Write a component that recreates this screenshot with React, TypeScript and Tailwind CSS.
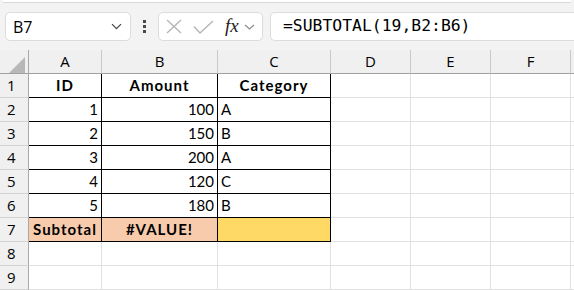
import React from "react";

const COLS = [
  { key: "A", w: 73 },
  { key: "B", w: 116 },
  { key: "C", w: 113 },
  { key: "D", w: 80 },
  { key: "E", w: 80 },
  { key: "F", w: 80 },
];

type Cell = {
  text?: string;
  align?: "left" | "right" | "center";
  bold?: boolean;
  bg?: string;
  black?: boolean;
};

const data: Cell[][] = [
  [
    { text: "ID", align: "center", bold: true, black: true },
    { text: "Amount", align: "center", bold: true, black: true },
    { text: "Category", align: "center", bold: true, black: true },
  ],
  [
    { text: "1", align: "right", black: true },
    { text: "100", align: "right", black: true },
    { text: "A", align: "left", black: true },
  ],
  [
    { text: "2", align: "right", black: true },
    { text: "150", align: "right", black: true },
    { text: "B", align: "left", black: true },
  ],
  [
    { text: "3", align: "right", black: true },
    { text: "200", align: "right", black: true },
    { text: "A", align: "left", black: true },
  ],
  [
    { text: "4", align: "right", black: true },
    { text: "120", align: "right", black: true },
    { text: "C", align: "left", black: true },
  ],
  [
    { text: "5", align: "right", black: true },
    { text: "180", align: "right", black: true },
    { text: "B", align: "left", black: true },
  ],
  [
    { text: "Subtotal", align: "center", bold: true, bg: "peach", black: true },
    { text: "#VALUE!", align: "center", bold: true, bg: "peach", black: true },
    { text: "", bg: "yellow", black: true },
  ],
  [],
  [],
];

function GridCell({ cell, w }: { cell?: Cell; w: number }) {
  const black = cell?.black;
  const bg =
    cell?.bg === "peach"
      ? "bg-[#f8cbad]"
      : cell?.bg === "yellow"
      ? "bg-[#ffd966]"
      : "bg-white";
  const border = black
    ? "border-r border-b border-r-black border-b-black"
    : "border-r border-b border-r-[#e1e1e1] border-b-[#e1e1e1]";
  const align =
    cell?.align === "right"
      ? "justify-end pr-[3px]"
      : cell?.align === "center"
      ? "justify-center"
      : "justify-start pl-[3px]";
  return (
    <div
      className={`h-[24px] shrink-0 flex items-center ${bg} ${border} ${align} ${
        cell?.bold ? "font-bold tracking-[1px]" : "font-normal"
      } text-[15px] text-black font-['Lato',sans-serif] leading-none`}
      style={{ width: w }}
    >
      {cell?.text}
    </div>
  );
}

export default function App() {
  return (
    <div className="w-[574px] h-[290px] overflow-hidden bg-white relative">
      {/* Toolbar */}
      <div className="h-[50px] bg-[#f3f3f3] flex flex-col">
        <div className="h-[3px] mx-[2px] bg-white border-b border-[#dadada] rounded-b-[5px]" />
        <div className="flex items-start pt-[9px] pl-[5px]">
          {/* Name box */}
          <div className="w-[126px] h-[29px] bg-white border border-[#dcdcdc] rounded-[5px] flex items-center pl-[7px] pr-[8px]">
            <span className="text-[16px] text-black font-['Open_Sans',sans-serif] leading-none">
              B7
            </span>
            <svg className="ml-auto" width="11" height="7" viewBox="0 0 11 7">
              <path d="M1 1.2 L5.5 5.7 L10 1.2" fill="none" stroke="#444" strokeWidth="1.2" />
            </svg>
          </div>
          {/* dots */}
          <div className="w-[27px] h-[29px] flex flex-col items-center justify-center gap-[2px]">
            <div className="w-[3px] h-[3px] bg-[#4a4a4a]" />
            <div className="w-[3px] h-[3px] bg-[#4a4a4a]" />
            <div className="w-[3px] h-[3px] bg-[#4a4a4a]" />
          </div>
          {/* fx box */}
          <div className="w-[105px] h-[29px] bg-white border border-[#dcdcdc] rounded-[5px] flex items-center pl-[7px]">
            <svg width="16" height="15" viewBox="0 0 16 15">
              <path d="M1 1 L15 14 M15 1 L1 14" fill="none" stroke="#b4b4b4" strokeWidth="1.3" />
            </svg>
            <svg className="ml-[11px]" width="21" height="14" viewBox="0 0 21 14">
              <path d="M1 6.5 L7 13 L20 1" fill="none" stroke="#b4b4b4" strokeWidth="1.3" />
            </svg>
            <span className="ml-[11px] text-[19px] italic font-['Liberation_Serif',serif] text-[#222] leading-none mt-[-2px]">
              fx
            </span>
            <svg className="ml-[5px]" width="11" height="6" viewBox="0 0 11 6">
              <path d="M1 1 L5.5 5 L10 1" fill="none" stroke="#8a8a8a" strokeWidth="1.1" />
            </svg>
          </div>
          {/* formula box */}
          <div className="ml-[7px] flex-1 h-[29px] bg-white border border-[#dcdcdc] border-r-0 rounded-l-[5px] flex items-center pl-[12px]">
            <span className="text-[16.4px] text-black font-['DejaVu_Sans_Mono',monospace] leading-none">
              =SUBTOTAL(19,B2:B6)
            </span>
          </div>
        </div>
      </div>

      {/* Column headers */}
      <div className="flex h-[24px] bg-[#f0f0f0]">
        <div className="w-[29px] shrink-0 h-full border-r border-b border-r-[#a8a8a8] border-b-[#a0a0a0] relative">
          <svg className="absolute left-[9px] top-[7px]" width="16" height="16" viewBox="0 0 16 16">
            <path d="M16 0 L16 16 L0 16 Z" fill="#b8b8b8" />
          </svg>
        </div>
        {COLS.map((c) => (
          <div
            key={c.key}
            className="shrink-0 h-full border-r border-b border-r-[#c8c8c8] border-b-[#a0a0a0] flex items-center justify-center text-[15px] text-black font-['Open_Sans',sans-serif] leading-none"
            style={{ width: c.w }}
          >
            {c.key}
          </div>
        ))}
        <div className="flex-1 h-full border-b border-b-[#a0a0a0]" />
      </div>

      {/* Rows */}
      {data.map((row, i) => (
        <div key={i} className="flex h-[24px]">
          <div className="w-[29px] shrink-0 h-full bg-[#f0f0f0] border-r border-b border-r-[#a8a8a8] border-b-[#d4d4d4] flex items-center pl-[7px] text-[15px] text-black font-['Open_Sans',sans-serif] leading-none">
            {i + 1}
          </div>
          {COLS.map((c, j) => (
            <GridCell key={c.key} cell={row[j]} w={c.w} />
          ))}
          <div className="flex-1 h-full border-b border-b-[#e1e1e1]" />
        </div>
      ))}
    </div>
  );
}
